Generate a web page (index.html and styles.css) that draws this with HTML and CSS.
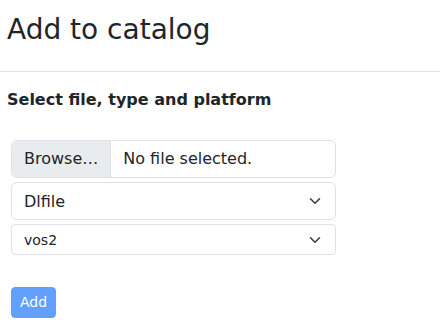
FILE: index.html
```html
<!DOCTYPE html>
<html lang="en">
<head>
  <meta charset="UTF-8">
  <meta name="viewport" content="width=device-width, initial-scale=1.0">
  <title>Add to catalog</title>
  <link rel="stylesheet" href="styles.css">
</head>
<body>
  <div class="page-head">
    <h2 class="page-title">Add to catalog</h2>
  </div>
  <div class="page-body">
    <h6 class="section-label">Select file, type and platform</h6>
    <form class="add-form">
      <div class="file-pick">
        <span class="file-btn">Browse…</span>
        <span class="file-name">No file selected.</span>
      </div>
      <div class="pick-box">
        <span>Dlfile</span>
        <svg class="pick-arrow" viewBox="0 0 16 16" width="16" height="12"><path d="m2 5 6 6 6-6" fill="none" stroke="#343a40" stroke-width="2" stroke-linecap="round" stroke-linejoin="round"/></svg>
      </div>
      <div class="pick-box small">
        <span>vos2</span>
        <svg class="pick-arrow" viewBox="0 0 16 16" width="16" height="12"><path d="m2 5 6 6 6-6" fill="none" stroke="#343a40" stroke-width="2" stroke-linecap="round" stroke-linejoin="round"/></svg>
      </div>
      <button type="button" class="add-btn" disabled>Add</button>
    </form>
  </div>
</body>
</html>
```

FILE: styles.css
```css
body {
  font-family: 'DejaVu Sans', sans-serif;
  margin: 0;
  background: white;
  color: #212529;
}

.page-head {
  padding: 9px 7px 20px;
  border-bottom: 1px solid #dee2e6;
}

.page-title {
  margin: 0;
  font-size: 28px;
  font-weight: 400;
  line-height: 42px;
}

.page-body {
  padding: 16px 7px;
}

.section-label {
  margin: 0 0 28px;
  font-size: 16px;
  font-weight: 700;
  line-height: 24px;
}

.add-form {
  display: flex;
  flex-direction: column;
  align-items: flex-start;
  gap: 4px;
  padding-left: 4px;
  width: 325px;
}

.file-pick {
  display: flex;
  align-items: center;
  align-self: stretch;
  height: 38px;
  box-sizing: border-box;
  border: 1px solid #dee2e6;
  border-radius: 6px;
  overflow: hidden;
  font-size: 16px;
  line-height: 24px;
}

.file-btn {
  align-self: stretch;
  display: flex;
  align-items: center;
  padding: 0 12px;
  background: #e9ecef;
  border-right: 1px solid #dee2e6;
}

.file-name {
  padding: 0 12px;
}

.pick-box {
  display: flex;
  align-items: center;
  justify-content: space-between;
  align-self: stretch;
  height: 38px;
  box-sizing: border-box;
  padding: 0 12px;
  border: 1px solid #dee2e6;
  border-radius: 6px;
  font-size: 16px;
}

.pick-box.small {
  height: 31px;
  font-size: 14px;
  border-radius: 4px;
}

.add-btn {
  margin-top: 28px;
  font-family: inherit;
  font-size: 14px;
  line-height: 21px;
  padding: 4px 8px;
  color: #fff;
  background: #0d6efd;
  border: 1px solid #0d6efd;
  border-radius: 4px;
  opacity: 0.65;
}
```
